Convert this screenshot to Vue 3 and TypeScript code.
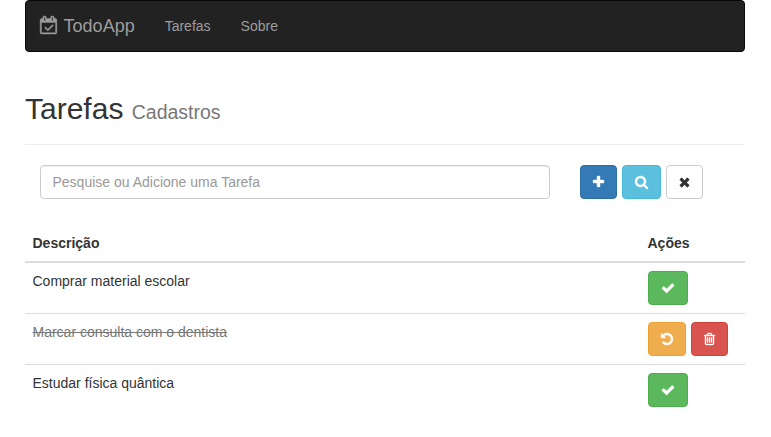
<script setup lang="ts">
import { ref } from 'vue'

interface Glyph {
  box: string
  width: number
  path: string
}

interface Task {
  id: number
  description: string
  done: boolean
}

const glyphs: Record<string, Glyph> = {
  calendar: {
    box: '0 0 1664 1792',
    width: 13,
    path: 'M1303 964l-512 512q-10 9-23 9t-23-9l-288-288q-9-10-9-23t9-22l46-46q9-9 22-9t23 9l220 220 444-444q10-9 23-9t22 9l46 46q9 9 9 22t-9 23zm-1175 700h1408v-1024h-1408v1024zm384-1216v-288q0-14-9-23t-23-9h-64q-14 0-23 9t-9 23v288q0 14 9 23t23 9h64q14 0 23-9t9-23zm768 0v-288q0-14-9-23t-23-9h-64q-14 0-23 9t-9 23v288q0 14 9 23t23 9h64q14 0 23-9t9-23zm384-64v1280q0 52-38 90t-90 38h-1408q-52 0-90-38t-38-90v-1280q0-52 38-90t90-38h128v-96q0-66 47-113t113-47h64q66 0 113 47t47 113v96h384v-96q0-66 47-113t113-47h64q66 0 113 47t47 113v96h128q52 0 90 38t38 90z',
  },
  plus: {
    box: '192 0 1408 1792',
    width: 11,
    path: 'M1600 736v192q0 40-28 68t-68 28h-416v416q0 40-28 68t-68 28h-192q-40 0-68-28t-28-68v-416h-416q-40 0-68-28t-28-68v-192q0-40 28-68t68-28h416v-416q0-40 28-68t68-28h192q40 0 68 28t28 68v416h416q40 0 68 28t28 68z',
  },
  search: {
    box: '64 0 1664 1792',
    width: 13,
    path: 'M1216 832q0-185-131.5-316.5t-316.5-131.5-316.5 131.5-131.5 316.5 131.5 316.5 316.5 131.5 316.5-131.5 131.5-316.5zm512 832q0 52-38 90t-90 38q-54 0-90-38l-343-342q-179 124-399 124-143 0-273.5-55.5t-225-150-150-225-55.5-273.5 55.5-273.5 150-225 225-150 273.5-55.5 273.5 55.5 225 150 150 225 55.5 273.5q0 220-124 399l343 343q37 37 37 90z',
  },
  times: {
    box: '192 0 1408 1792',
    width: 11,
    path: 'M1490 1322q0 40-28 68l-136 136q-28 28-68 28t-68-28l-294-294-294 294q-28 28-68 28t-68-28l-136-136q-28-28-28-68t28-68l294-294-294-294q-28-28-28-68t28-68l136-136q28-28 68-28t68 28l294 294 294-294q28-28 68-28t68 28l136 136q28 28 28 68t-28 68l-294 294 294 294q28 28 28 68z',
  },
  check: {
    box: '0 0 1792 1792',
    width: 14,
    path: 'M1671 566q0 40-28 68l-724 724-136 136q-28 28-68 28t-68-28l-136-136-362-362q-28-28-28-68t28-68l136-136q28-28 68-28t68 28l294 295 656-657q28-28 68-28t68 28l136 136q28 28 28 68z',
  },
  undo: {
    box: '128 0 1536 1792',
    width: 12,
    path: 'M1664 896q0 156-61 298t-164 245-245 164-298 61q-172 0-327-72.5t-264-204.5q-7-10-6.5-22.5t8.5-20.5l137-138q10-9 25-9 16 2 23 12 73 95 179 147t225 52q104 0 198.5-40.5t163.5-109.5 109.5-163.5 40.5-198.5-40.5-198.5-109.5-163.5-163.5-109.5-198.5-40.5q-98 0-188 35.5t-160 101.5l137 138q31 30 14 69-17 40-59 40h-448q-26 0-45-19t-19-45v-448q0-42 40-59 39-17 69 14l130 129q107-101 244.5-156.5t284.5-55.5q156 0 298 61t245 164 164 245 61 298z',
  },
  trash: {
    box: '192 0 1408 1792',
    width: 11,
    path: 'M704 736v576q0 14-9 23t-23 9h-64q-14 0-23-9t-9-23v-576q0-14 9-23t23-9h64q14 0 23 9t9 23zm256 0v576q0 14-9 23t-23 9h-64q-14 0-23-9t-9-23v-576q0-14 9-23t23-9h64q14 0 23 9t9 23zm256 0v576q0 14-9 23t-23 9h-64q-14 0-23-9t-9-23v-576q0-14 9-23t23-9h64q14 0 23 9t9 23zm128 724v-948h-896v948q0 22 7 40.5t14.5 27 10.5 8.5h832q3 0 10.5-8.5t14.5-27 7-40.5zm-672-1076h448l-48-117q-7-9-17-11h-317q-10 2-17 11zm928 32v64q0 14-9 23t-23 9h-96v948q0 83-47 143.5t-113 60.5h-832q-66 0-113-58.5t-47-141.5v-952h-96q-14 0-23-9t-9-23v-64q0-14 9-23t23-9h309l70-167q15-37 54-63t79-26h320q40 0 79 26t54 63l70 167h309q14 0 23 9t9 23z',
  },
}

const search = ref('')

const tasks = ref<Task[]>([
  { id: 1, description: 'Comprar material escolar', done: false },
  { id: 2, description: 'Marcar consulta com o dentista', done: true },
  { id: 3, description: 'Estudar física quântica', done: false },
])

const toolbar = [
  { icon: 'plus', kind: 'btn-primary' },
  { icon: 'search', kind: 'btn-info' },
  { icon: 'times', kind: 'btn-default' },
]

function rowActions(task: Task) {
  return task.done
    ? [
        { icon: 'undo', kind: 'btn-warning' },
        { icon: 'trash', kind: 'btn-danger' },
      ]
    : [{ icon: 'check', kind: 'btn-success' }]
}
</script>

<template>
  <div class="container">
    <nav class="navbar">
      <a class="brand">
        <svg class="brand-icon" :viewBox="glyphs.calendar.box"><path :d="glyphs.calendar.path" /></svg>
        <span>TodoApp</span>
      </a>
      <a class="nav-link">Tarefas</a>
      <a class="nav-link">Sobre</a>
    </nav>

    <header class="page-header">
      <h2>Tarefas <small>Cadastros</small></h2>
    </header>

    <div class="task-form">
      <input v-model="search" class="form-control" placeholder="Pesquise ou Adicione uma Tarefa" />
      <div class="buttons">
        <button v-for="b in toolbar" :key="b.icon" class="btn" :class="b.kind">
          <svg :viewBox="glyphs[b.icon].box" :width="glyphs[b.icon].width" height="14">
            <path :d="glyphs[b.icon].path" />
          </svg>
        </button>
      </div>
    </div>

    <table class="table">
      <thead>
        <tr>
          <th>Descrição</th>
          <th class="actions">Ações</th>
        </tr>
      </thead>
      <tbody>
        <tr v-for="task in tasks" :key="task.id">
          <td :class="{ done: task.done }">{{ task.description }}</td>
          <td class="action-cell">
            <div class="buttons">
              <button v-for="b in rowActions(task)" :key="b.icon" class="btn" :class="b.kind">
                <svg :viewBox="glyphs[b.icon].box" :width="glyphs[b.icon].width" height="14">
                  <path :d="glyphs[b.icon].path" />
                </svg>
              </button>
            </div>
          </td>
        </tr>
      </tbody>
    </table>
  </div>
</template>

<style>
body {
  background: #fff;
}
</style>

<style scoped>
.container,
.container * {
  box-sizing: border-box;
}
.container {
  width: 770px;
  padding: 0 25px;
  font-family: "Liberation Sans", Arial, sans-serif;
  font-size: 14px;
  line-height: 20px;
  color: #333;
}
svg {
  display: block;
  overflow: visible;
  fill: currentColor;
  stroke: currentColor;
  stroke-width: 50;
}
.navbar {
  display: flex;
  height: 52px;
  background: #222;
  border: 1px solid #080808;
  border-radius: 4px;
  color: #9d9d9d;
}
.brand {
  display: flex;
  gap: 6.3px;
  padding: 15px 15px 15px 14.3px;
  font-size: 18px;
}
.brand-icon {
  width: 17px;
  height: 18px;
  stroke-width: 40;
}
.nav-link {
  padding: 15px;
}
.page-header {
  margin: 40px 0 20px;
  padding-bottom: 9px;
  border-bottom: 1px solid #eee;
}
h2 {
  margin: 0 0 10px;
  font-size: 30px;
  font-weight: 500;
  line-height: 33px;
}
h2 small {
  font-size: 19.5px;
  font-weight: 400;
  line-height: 1;
  color: #777;
}
.task-form {
  display: flex;
  gap: 30px;
  padding: 0 15px;
}
.form-control {
  width: 510px;
  height: 34px;
  padding: 6px 11.5px;
  border: 1px solid #ccc;
  border-radius: 4px;
  box-shadow: inset 0 1px 1px rgba(0, 0, 0, 0.075);
  font: inherit;
  color: #555;
}
.form-control::placeholder {
  color: #999;
  opacity: 1;
}
.buttons {
  display: flex;
  gap: 5px;
}
.btn {
  display: flex;
  align-items: center;
  height: 34px;
  padding: 0 12.5px 0 11.5px;
  border: 1px solid transparent;
  border-radius: 4px;
  color: #fff;
}
.btn-primary {
  background: #337ab7;
  border-color: #2e6da4;
}
.btn-info {
  background: #5bc0de;
  border-color: #46b8da;
}
.btn-default {
  background: #fff;
  border-color: #ccc;
  color: #333;
}
.btn-success {
  background: #5cb85c;
  border-color: #4cae4c;
}
.btn-warning {
  background: #f0ad4e;
  border-color: #eea236;
}
.btn-danger {
  background: #d9534f;
  border-color: #d43f3a;
}
.table {
  width: 100%;
  margin-top: 26px;
  border-collapse: separate;
  border-spacing: 0;
  table-layout: fixed;
}
th,
td {
  padding: 8px 8px 8px 7.5px;
  text-align: left;
  vertical-align: top;
}
.action-cell {
  padding-left: 8px;
}
th {
  border-bottom: 2px solid #ddd;
}
tbody tr + tr td {
  border-top: 1px solid #ddd;
}
.actions {
  width: 105px;
}
.done {
  color: #777;
  text-decoration: line-through;
}
</style>
